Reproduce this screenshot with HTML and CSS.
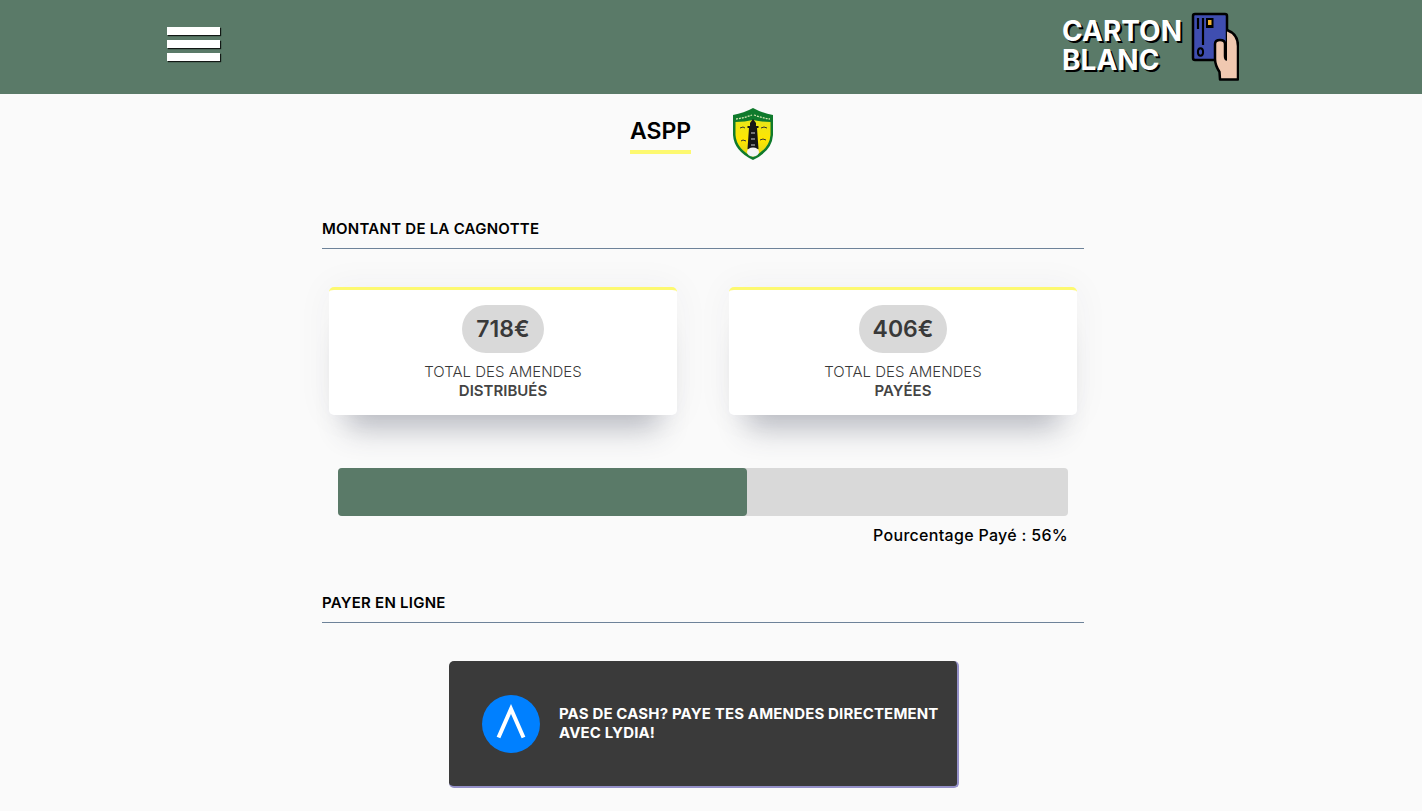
FILE: index.html
```html
<!DOCTYPE html>
<html lang="fr">
<head>
<meta charset="utf-8">
<title>Carton Blanc</title>
<link rel="stylesheet" href="styles.css">
</head>
<body>
<header class="topbar">
  <div class="burger"><span></span><span></span><span></span></div>
  <div class="brand">
    <div class="brand-name">CARTON<br>BLANC</div>
    <svg class="brand-icon" width="48" height="70" viewBox="0 0 48 70">
      <rect x="2" y="2" width="34" height="46" rx="2" fill="#3f4eb0" stroke="#000" stroke-width="2.500"/>
      <path d="M7 6 V17 M12 6 V33" stroke="#000" stroke-width="2.200" fill="none"/>
      <ellipse cx="9.500" cy="40" rx="2.600" ry="3.800" fill="none" stroke="#000" stroke-width="2"/>
      <rect x="15" y="6" width="7.500" height="10" fill="#000"/>
      <rect x="17" y="8" width="3.500" height="5" fill="#f2b233"/>
      <path d="M36 18 Q47 22 47 34 V67.500 H29 L28.500 60 Q24 53 24 47 V32 Q24 28 29 28 Q34 28 34 32 V44 Q34 47.500 36 47.500 Z" fill="#f0c8b0"/>
      <path d="M36 18 Q47 22 47 34 V67.500 H29 L28.500 60 Q24 53 24 47 V32 Q24 28 29 28 Q34 28 34 32 V44 Q34 47.500 36 47.500" fill="none" stroke="#000" stroke-width="2.500" stroke-linejoin="round"/>
    </svg>
  </div>
</header>
<main class="page">
  <div class="club">
    <h1 class="club-name">ASPP</h1>
    <svg class="crest" width="42" height="54" viewBox="0 0 42 54">
      <defs>
        <linearGradient id="crestFill" x1="0" y1="0" x2="0" y2="1">
          <stop offset="0" stop-color="#e9e61a"/>
          <stop offset="0.55" stop-color="#ffe600"/>
          <stop offset="1" stop-color="#d6d420"/>
        </linearGradient>
      </defs>
      <path d="M21 1 Q30 6 41 8 V28 Q40 44 21 53 Q2 44 1 28 V8 Q12 6 21 1 Z" fill="#0f7a2c"/>
      <path d="M3.500 15 Q13 15 21 13 Q29 15 38.500 15 V28 Q37.500 42 21 50 Q4.500 42 3.500 28 Z" fill="url(#crestFill)"/>
      <path d="M4 12 Q12 11 20 8 M22 8 Q30 11 38 12" stroke="#d7e6b0" stroke-width="1.300" stroke-dasharray="2 1" fill="none"/>
      <path d="M18 16 L21 12 L24 16 V19 H26.500 V21 H25 L26.500 42 H15.500 L17 21 H15.500 V19 H18 Z" fill="#161616"/>
      <path d="M19 26 H23 M19 32 H23 M19 38 H23" stroke="#d0d0d0" stroke-width="1.200"/>
      <ellipse cx="21" cy="45" rx="6" ry="4.500" fill="#f4f4f4"/>
      <path d="M8 21 L11 20 L13 21 M29 21 L32 20 L35 21 M28 33 L31 32 L34 33 M9 34 L11 33 L14 34" stroke="#333" fill="none"/>
    </svg>
  </div>

  <section class="section">
    <h2 class="section-title">MONTANT DE LA CAGNOTTE</h2>
    <div class="cards">
      <article class="card">
        <div class="pill">718€</div>
        <p class="card-text">TOTAL DES AMENDES<br><strong>DISTRIBUÉS</strong></p>
      </article>
      <article class="card">
        <div class="pill">406€</div>
        <p class="card-text">TOTAL DES AMENDES<br><strong>PAYÉES</strong></p>
      </article>
    </div>
    <div class="progress"><div class="progress-fill"></div></div>
    <p class="progress-label">Pourcentage Payé : 56%</p>
  </section>

  <section class="section pay">
    <h2 class="section-title">PAYER EN LIGNE</h2>
    <a class="lydia">
      <svg class="lydia-logo" width="58" height="58" viewBox="0 0 58 58">
        <circle cx="29" cy="29" r="29" fill="#0080ff"/>
        <path d="M16.500 42.500 L29 14 L41.500 42.500" fill="none" stroke="#fff" stroke-width="4"/>
      </svg>
      <span class="lydia-text">PAS DE CASH? PAYE TES AMENDES DIRECTEMENT AVEC LYDIA!</span>
    </a>
  </section>
</main>
</body>
</html>
```
FILE: styles.css
```css
* { box-sizing: border-box; }
html, body { margin: 0; padding: 0; }
body {
  background: #fafafa;
  font-family: "Inter", "Liberation Sans", sans-serif;
  color: #000;
  height: 811px;
  overflow: hidden;
}
.topbar {
  height: 94px;
  background: #5a7a68;
  display: flex;
  justify-content: space-between;
  align-items: center;
  padding: 0 183px 0 167px;
}
.burger {
  display: flex;
  flex-direction: column;
  gap: 5px;
  width: 53px;
  margin-top: -6px;
}
.burger span {
  display: block;
  height: 8px;
  background: #fff;
  box-shadow: 1px 1px 1px rgba(0, 0, 0, 0.8);
}
.brand { display: flex; align-items: center; gap: 9px; margin-top: -1px; }
.brand-name {
  font-size: 28px;
  line-height: 29px;
  font-weight: 700;
  color: #fff;
  text-shadow: 2px 2px 0 #000;
  margin-top: -1px;
}
.page { width: 762px; margin-left: 322px; }
.club {
  display: flex;
  justify-content: center;
  align-items: flex-start;
  gap: 41px;
  height: 108px;
  padding-top: 12px;
  margin-left: -2px;
}
.crest { margin-top: 1px; }
.club-name {
  margin: 0;
  font-size: 23px;
  line-height: 38px;
  height: 48px;
  font-weight: 600;
  border-bottom: 4px solid #fdf970;
  padding: 6px 0 0;
}
.section-title {
  margin: 0;
  font-size: 15px;
  line-height: 20px;
  font-weight: 600;
  letter-spacing: 0.25px;
  height: 29px;
  padding-top: 17px;
  box-sizing: content-box;
  border-bottom: 1px solid #6d8299;
}
.cards {
  display: flex;
  gap: 52px;
  padding: 38px 7px 0;
}
.card {
  width: 348px;
  height: 128px;
  background: #fff;
  border-top: 3px solid #fdf970;
  border-radius: 5px;
  box-shadow: 0 32px 30px -18px rgba(60, 66, 87, 0.32), 0 0 36px rgba(60, 66, 87, 0.05);
  display: flex;
  flex-direction: column;
  align-items: center;
  padding-top: 15px;
}
.pill {
  height: 48px;
  line-height: 48px;
  padding: 0 14px;
  border-radius: 24px;
  background: #d9d9d9;
  font-size: 23px;
  font-weight: 600;
  color: #393939;
}
.card-text {
  margin: 9px 0 0;
  text-align: center;
  font-size: 15px;
  line-height: 19px;
  font-weight: 300;
  color: #393939;
}
.card-text strong { font-weight: 600; color: #444; }
.progress {
  width: 730px;
  height: 48px;
  margin: 53px 0 0 16px;
  background: #d9d9d9;
  border-radius: 4px;
}
.progress-fill {
  width: 56%;
  height: 100%;
  background: #5a7a68;
  border-radius: 4px;
}
.progress-label {
  margin: 9px 16px 0 0;
  text-align: right;
  font-size: 16px;
  line-height: 21px;
  font-weight: 500;
  letter-spacing: 0.3px;
}
.pay { margin-top: 30px; }
.lydia {
  width: 510px;
  height: 127px;
  margin: 38px 0 0 127px;
  background: #3a3a3a;
  border-radius: 5px;
  border-right: 2px solid #9490c8;
  border-bottom: 2px solid #9490c8;
  display: flex;
  align-items: center;
  padding: 0 18px 0 33px;
  gap: 19px;
}
.lydia-logo { flex: none; }
.lydia-text {
  color: #fff;
  font-size: 15px;
  line-height: 19px;
  font-weight: 700;
  letter-spacing: 0.15px;
  margin-bottom: 2px;
}
```
